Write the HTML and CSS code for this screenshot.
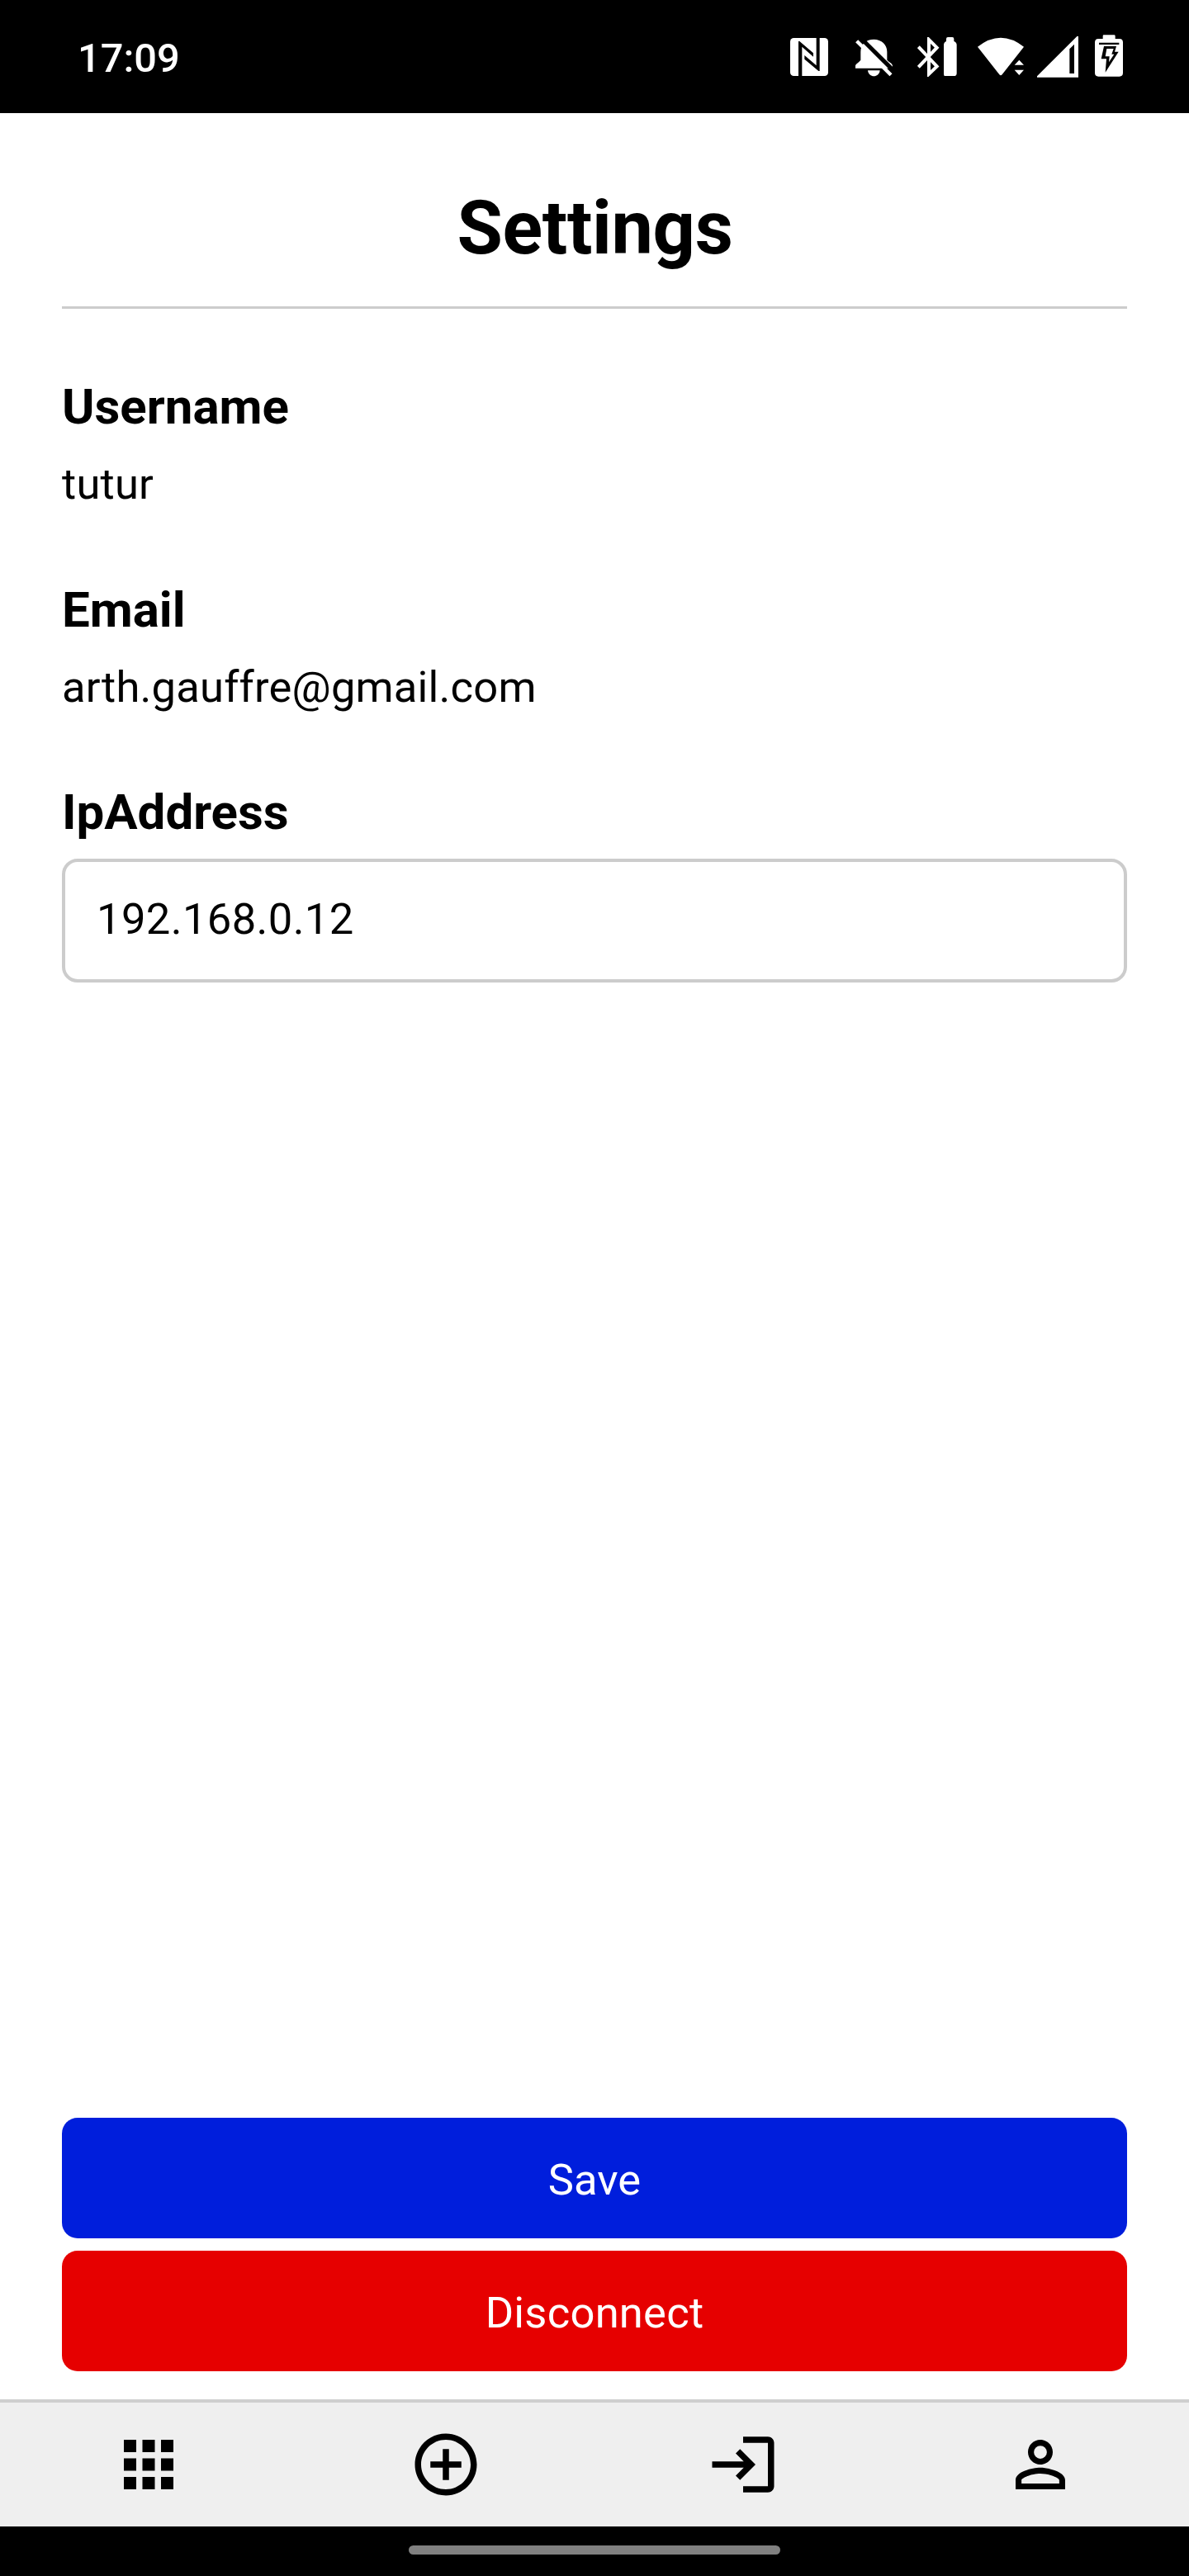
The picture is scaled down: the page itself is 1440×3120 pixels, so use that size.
FILE: index.html
```html
<!DOCTYPE html>
<html lang="en">
<head>
<meta charset="utf-8">
<title>Settings</title>
<link rel="stylesheet" href="styles.css">
</head>
<body>
<div class="screen">
  <div class="status-bar">
    <span class="clock">17:09</span>
    <div class="status-icons">
      <svg class="icon-nfc" viewBox="81 78 138 138"><rect x="81" y="78" width="138" height="138" rx="13" fill="#fff"/><path d="M111 90h4l50 43v13l-41-36v107h-13zM176 78h12v120h-4l-51-43v-14l43 37z"/></svg>
      <svg class="icon-bell" viewBox="317 81 138 138"><path fill="#fff" d="M336 128C336 100 356 83 384 83s48 19 48 45v30c8 9 20 12 20 22v8H317v-9c0-7 11-10 19-21z"/><path d="M334 76 463 204" stroke="#000" stroke-width="15"/><path d="M322 89 446 212" stroke="#fff" stroke-width="13"/><path fill="#fff" d="M362 196h44c-3 28-41 28-44 0z"/></svg>
      <svg class="icon-bluetooth" viewBox="543 75 144 144"><path fill="none" stroke="#fff" stroke-width="12" d="m547 110 67 71-29 28V84l29 29-67 71"/><path fill="#fff" d="M648 75h22q6 0 6 6v9q10 4 10 13v103q0 10-10 10h-33q-4 0-4-10V103q0-9 9-13v-9q0-6 6-6z"/></svg>
      <svg class="icon-wifi" viewBox="762 75 168 144"><path fill="#fff" d="M762 110q84-66 168 0l-79 101q-5 6-10 0zM896 176l17-18 17 18zM896 194h34l-17 19z"/></svg>
      <svg class="icon-signal" viewBox="978 72 150 150"><path fill="#fff" fill-rule="evenodd" d="M978 217 1123 72h5v149H978zM1113 101l-17 17v89h17z"/></svg>
      <svg class="icon-battery" viewBox="1188 66 102 153"><path fill="#fff" d="M1220 67h38q4 0 4 4v10h15q13 0 13 13v111q0 13-13 13h-76q-13 0-13-13V94q0-13 13-13h16V71q0-4 3-4z"/><path d="M1203 95h73v7h-73zM1221 108h45l-6 20h14l-48 75 4-49h-19z"/><path fill="#fff" d="M1231 117h25l-7 20h9l-19 29 2-21h-15z"/></svg>
    </div>
  </div>
  <main class="content">
    <header class="page-header"><h1>Settings</h1></header>
    <section class="fields">
      <div class="field">
        <h2 class="label">Username</h2>
        <p class="value">tutur</p>
      </div>
      <div class="field">
        <h2 class="label">Email</h2>
        <p class="value">arth.gauffre@gmail.com</p>
      </div>
      <div class="field">
        <h2 class="label">IpAddress</h2>
        <div class="input">192.168.0.12</div>
      </div>
    </section>
    <div class="actions">
      <button class="button save">Save</button>
      <button class="button disconnect">Disconnect</button>
    </div>
  </main>
  <nav class="tab-bar">
    <a class="tab"><svg viewBox="0 0 24 24"><path d="M4 8h4V4H4zm6 12h4v-4h-4zm-6 0h4v-4H4zm0-6h4v-4H4zm6 0h4v-4h-4zm6-10v4h4V4zm-6 4h4V4h-4zm6 6h4v-4h-4zm0 6h4v-4h-4z"/></svg></a>
    <a class="tab"><svg viewBox="0 0 24 24"><path d="M13 7h-2v4H7v2h4v4h2v-4h4v-2h-4zm-1-5C6.480 2 2 6.480 2 12s4.480 10 10 10 10-4.480 10-10S17.520 2 12 2zm0 18c-4.410 0-8-3.590-8-8s3.590-8 8-8 8 3.590 8 8-3.590 8-8 8z"/></svg></a>
    <a class="tab"><svg viewBox="0 0 24 24"><path d="M11 7 9.600 8.400l2.600 2.600H2v2h10.200l-2.600 2.600L11 17l5-5zm9 12h-8v2h8c1.100 0 2-.9 2-2V5c0-1.100-.9-2-2-2h-8v2h8z"/></svg></a>
    <a class="tab"><svg viewBox="0 0 24 24"><path d="M12 5.900a2.100 2.100 0 1 1 0 4.200 2.100 2.100 0 0 1 0-4.200m0 9c2.970 0 6.100 1.460 6.100 2.100v1.100H5.900V17c0-.64 3.130-2.100 6.100-2.100M12 4C9.790 4 8 5.790 8 8s1.790 4 4 4 4-1.790 4-4-1.790-4-4-4zm0 9c-2.670 0-8 1.340-8 4v3h16v-3c0-2.660-5.330-4-8-4z"/></svg></a>
  </nav>
  <div class="gesture-bar"><div class="gesture-pill"></div></div>
</div>
</body>
</html>
```
FILE: styles.css
```css
* { box-sizing: border-box; margin: 0; padding: 0; }
body { background: #fff; color: #000; font-family: Roboto, sans-serif; }
svg { display: block; }

.screen { display: flex; flex-direction: column; width: 1440px; height: 3120px; }

.status-bar {
  display: flex; justify-content: space-between; align-items: flex-start;
  height: 137px; padding: 42px 80px 0 94px; background: #000; color: #fff;
}
.clock { font-size: 48.75px; font-weight: 500; line-height: 58px; }
.status-icons { display: flex; align-items: flex-start; }
.icon-nfc { width: 46px; height: 46px; margin: 4px 33px 0 0; }
.icon-bell { width: 46px; height: 46px; margin: 5px 29px 0 0; }
.icon-bluetooth { width: 48px; height: 48px; margin: 3px 25px 0 0; }
.icon-wifi { width: 56px; height: 48px; margin: 3px 16px 0 0; }
.icon-signal { width: 50px; height: 50px; margin: 2px 20px 0 0; }
.icon-battery { width: 34px; height: 51px; }

.content { flex: 1; display: flex; flex-direction: column; padding: 0 75px 34px; }
.page-header { padding: 87px 0 41px 1px; border-bottom: 3px solid #ccc; text-align: center; }
h1 { font-size: 90px; font-weight: 700; line-height: 106px; letter-spacing: -0.35px; }

.fields { display: flex; flex-direction: column; gap: 86.5px; margin-top: 84px; }
.label { font-size: 60px; font-weight: 700; line-height: 70px; }
.value { margin-top: 27px; font-size: 52.5px; line-height: 62px; letter-spacing: 0.2px; }
.input {
  height: 150px; margin-top: 21px; padding: 38px;
  border: 4px solid #ccc; border-radius: 19px;
  font-size: 52.5px; line-height: 62px; letter-spacing: 0.38px;
}

.actions { display: flex; flex-direction: column; gap: 15px; margin-top: auto; }
.button {
  height: 146px; padding-top: 4px; border: 0; border-radius: 19px;
  color: #fff; font-family: inherit; font-size: 52.5px; line-height: 62px;
}
.save { background: #001edc; }
.disconnect { background: #e60000; letter-spacing: 0.25px; }

.tab-bar { display: flex; height: 154px; border-top: 4px solid #cfcfcf; background: #efefef; }
.tab { flex: 1; display: flex; align-items: center; justify-content: center; }
.tab svg { width: 90px; height: 90px; }

.gesture-bar { display: flex; justify-content: center; height: 60px; padding-top: 23px; background: #000; }
.gesture-pill { width: 450px; height: 11px; border-radius: 5.5px; background: #808080; }
```
